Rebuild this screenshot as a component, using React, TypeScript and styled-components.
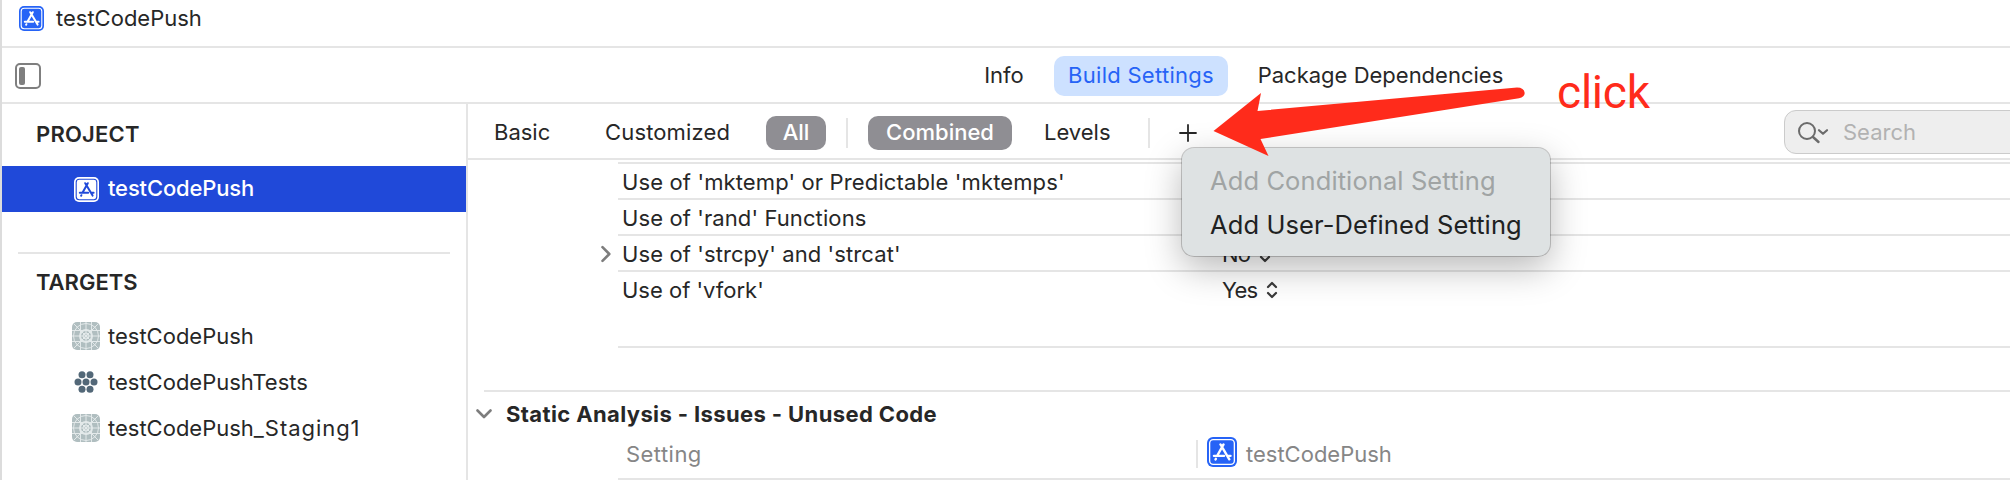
import React from "react";
import styled, { createGlobalStyle } from "styled-components";

const line = "#e5e5e5";
const ink = "#272727";
const accent = "#2663f6";

const GlobalStyle = createGlobalStyle`
  *, *::before, *::after { box-sizing: border-box; }
  body {
    margin: 0;
    background: #fff;
    color: ${ink};
    font-family: Inter, "Liberation Sans", sans-serif;
    font-size: 22px;
    line-height: 26px;
    overflow: hidden;
  }
`;

const Window = styled.div`
  position: relative;
  display: flex;
  flex-direction: column;
  width: 2010px;
  height: 480px;
  overflow: hidden;
  border-left: 2px solid #dcdcdc;
`;

const Label = styled.span<{ $track?: number; $lift?: number }>`
  white-space: nowrap;
  letter-spacing: ${(p) => p.$track ?? 0}px;
  padding-bottom: ${(p) => (p.$lift ?? 0) * 2}px;
`;

const TitleBar = styled.header`
  display: flex;
  align-items: center;
  gap: 12px;
  flex: none;
  height: 48px;
  padding: 0 0 9px 17px;
  border-bottom: 2px solid ${line};
`;

const TabBar = styled.nav`
  display: flex;
  align-items: center;
  gap: 15px;
  flex: none;
  height: 56px;
  padding-left: 13px;
  border-bottom: 2px solid ${line};
`;

const SidebarToggle = styled.span`
  width: 26px;
  height: 26px;
  margin: 2px 913px 0 0;
  padding: 2px;
  border: 2px solid #7f7f7f;
  border-radius: 5px;

  &::before {
    content: "";
    display: block;
    width: 6px;
    height: 18px;
    border-radius: 2px;
    background: #7f7f7f;
  }
`;

const Tab = styled.a<{ $active?: boolean; $width: number }>`
  display: flex;
  align-items: center;
  justify-content: center;
  width: ${(p) => p.$width}px;
  height: 40px;
  margin-top: 2px;
  padding-bottom: 2px;
  border-radius: 10px;
  background: ${(p) => (p.$active ? "#cde1ff" : "transparent")};
  color: ${(p) => (p.$active ? accent : ink)};
`;

const Body = styled.div`
  display: flex;
  flex: 1;
  min-height: 0;
`;

const Sidebar = styled.aside`
  display: flex;
  flex-direction: column;
  flex: none;
  width: 466px;
  border-right: 2px solid ${line};
`;

const Heading = styled.h2<{ $compact?: boolean }>`
  margin: 0;
  padding: ${(p) => (p.$compact ? "15px 0 18px" : "17px 0 19px")};
  padding-left: 34px;
  font-size: 22px;
  font-weight: 600;
  line-height: 26px;
`;

const SidebarRule = styled.hr`
  width: 432px;
  height: 2px;
  margin: 40px 16px 0;
  border: 0;
  background: ${line};
`;

const TargetRow = styled.div<{ $selected?: boolean }>`
  display: flex;
  align-items: center;
  gap: 8px;
  height: 46px;
  padding-left: 70px;
  background: ${(p) => (p.$selected ? "#2049d9" : "transparent")};
  color: ${(p) => (p.$selected ? "#fff" : ink)};
  font-weight: ${(p) => (p.$selected ? 500 : 400)};
`;

const IconCell = styled.span`
  display: flex;
  justify-content: center;
  width: 28px;
`;

const Editor = styled.main`
  display: flex;
  flex-direction: column;
  flex: 1;
  min-width: 0;
`;

const FilterBar = styled.div`
  display: flex;
  align-items: center;
  flex: none;
  height: 56px;
  padding: 2px 0 0 26px;
  border-bottom: 2px solid ${line};

  > * { flex: none; }
`;

const FilterText = styled.span<{ $width: number; $before?: number }>`
  width: ${(p) => p.$width}px;
  margin-left: ${(p) => p.$before ?? 0}px;
`;

const Pill = styled.span<{ $width: number }>`
  display: flex;
  align-items: center;
  justify-content: center;
  width: ${(p) => p.$width}px;
  height: 34px;
  margin-top: 2px;
  padding-bottom: 2px;
  border-radius: 10px;
  background: #8f8e93;
  color: #fff;
  font-weight: 500;
`;

const Separator = styled.span<{ $before?: number; $after: number }>`
  width: 2px;
  height: 30px;
  margin: 2px ${(p) => p.$after}px 0 ${(p) => p.$before ?? 0}px;
  background: ${line};
`;

const ColumnDivider = styled.span`
  width: 2px;
  height: 28px;
  margin-right: 9px;
  background: ${line};
`;

const AddButton = styled.span`
  display: flex;
  margin-top: 2px;
`;

const SearchField = styled.div`
  display: flex;
  align-items: center;
  gap: 12px;
  width: 300px;
  height: 44px;
  margin-left: 587px;
  padding-left: 12px;
  border: 1.5px solid #cbcbcb;
  border-radius: 12px;
  background: #eeeeee;
  color: #b2b2b2;
`;

const Settings = styled.div`
  display: flex;
  flex-direction: column;
  padding-top: 2px;
`;

const SettingRow = styled.div<{ $height?: number }>`
  display: flex;
  align-items: flex-start;
  height: ${(p) => p.$height ?? 36}px;
  margin-left: 150px;
  padding: 5px 0 0 4px;
  border-top: 2px solid ${line};
`;

const SettingName = styled.span`
  display: flex;
  width: 600px;
`;

const Disclosure = styled.span`
  display: flex;
  width: 22px;
  margin-left: -22px;
  padding-top: 4px;
`;

const SettingValue = styled.span`
  display: flex;
  align-items: center;
  gap: 9px;
`;

const GroupHeader = styled.div`
  display: flex;
  align-items: center;
  gap: 14px;
  height: 46px;
  margin-left: 16px;
  border-top: 2px solid ${line};
  font-weight: 700;

  svg { margin-left: -8px; }
`;

const ColumnHeader = styled.div`
  display: flex;
  align-items: center;
  height: 44px;
  margin-left: 150px;
  padding: 0 0 6px 8px;
  border-bottom: 2px solid ${line};
  color: #868686;

  svg { margin: 0 9px 4px 0; }
`;

const ColumnName = styled.span`
  width: 570px;
`;

const Menu = styled.div`
  position: absolute;
  left: 1180px;
  top: 148px;
  display: flex;
  flex-direction: column;
  width: 368px;
  height: 108px;
  padding: 11px 0 0 28px;
  border-radius: 12px;
  background: #dee2e3;
  box-shadow: 0 0 0 1px rgba(0, 0, 0, 0.2), 0 12px 36px rgba(0, 0, 0, 0.28);
  font-size: 25.5px;
`;

const MenuItem = styled.div<{ $disabled?: boolean }>`
  height: 44px;
  line-height: 44px;
  color: ${(p) => (p.$disabled ? "#a0a4a4" : "#202121")};
`;

const Arrow = styled.svg`
  position: absolute;
  left: 1208px;
  top: 84px;
`;

const Note = styled.div`
  position: absolute;
  left: 1555px;
  top: 64px;
  color: #ff2b1b;
  font-family: Roboto, "Liberation Sans", sans-serif;
  font-size: 46px;
  line-height: 56px;
  letter-spacing: -0.2px;
`;

const AppIcon = ({ size = 25, fill = accent, mark = "#fff" }: { size?: number; fill?: string; mark?: string }) => (
  <svg width={size} height={size} viewBox="0 0 25 25" fill="none">
    <rect width="25" height="25" rx="5" fill={fill} />
    <rect x="2.2" y="2.2" width="20.6" height="20.6" rx="3" stroke={mark} strokeWidth="1.1" />
    <g stroke={mark} strokeWidth="2" strokeLinecap="round">
      <path d="M13.8 6.2 8.6 15.4M11.2 6.2l1.2 1.9M13.2 9.4l5.4 9.2M5.8 15.7h8.4M17.4 15.7h2.2M7.4 18.2l-.3.5" />
    </g>
  </svg>
);

const TargetIcon = () => (
  <svg width="28" height="28" viewBox="0 0 28 28" fill="none">
    <rect width="28" height="28" rx="5" fill="#b0bec0" />
    <g stroke="#e3e9ea" strokeWidth="1">
      <path d="M8.5 0v28M14 0v28M19.5 0v28M0 8.5h28M0 14h28M0 19.5h28M2 2l24 24M26 2 2 26" />
      <circle cx="14" cy="14" r="12.5" />
      <circle cx="14" cy="14" r="6" strokeWidth="2" />
      <circle cx="14" cy="14" r="3" />
    </g>
  </svg>
);

const TestsIcon = () => (
  <svg width="24" height="22" viewBox="0 0 24 22" fill="#536878">
    {[[8, 3.7], [16, 3.7], [4, 11], [12, 11], [20, 11], [8, 18.3], [16, 18.3]].map(([x, y]) => (
      <circle key={`${x}-${y}`} cx={x} cy={y} r="3.5" />
    ))}
  </svg>
);

const Stepper = () => (
  <svg width="12" height="18" viewBox="0 0 12 18" fill="none" stroke="#3a3a3a" strokeWidth="2.2" strokeLinecap="round" strokeLinejoin="round">
    <path d="M2 6l4-4 4 4M2 12l4 4 4-4" />
  </svg>
);

const SearchIcon = () => (
  <svg width="34" height="24" viewBox="0 0 34 24" fill="none" stroke="#6b6b6b" strokeWidth="2" strokeLinecap="round" strokeLinejoin="round">
    <circle cx="10" cy="11" r="8" />
    <path d="M16 17l5.5 5" strokeWidth="2.4" />
    <path d="M22 10.2l4 3.6 4-3.6" strokeWidth="2.2" />
  </svg>
);

export default function App() {
  return (
    <>
      <GlobalStyle />
      <Window>
        <TitleBar>
          <AppIcon />
          <Label $lift={0.5}>testCodePush</Label>
        </TitleBar>
        <TabBar>
          <SidebarToggle />
          <Tab $width={70}><Label>Info</Label></Tab>
          <Tab $width={174} $active><Label $track={0.28}>Build Settings</Label></Tab>
          <Tab $width={275}><Label>Package Dependencies</Label></Tab>
        </TabBar>
        <Body>
          <Sidebar>
            <Heading><Label $track={0.2}>PROJECT</Label></Heading>
            <TargetRow $selected>
              <IconCell><AppIcon fill="#fff" mark="#2049d9" /></IconCell>
              <Label $track={-0.15} $lift={1}>testCodePush</Label>
            </TargetRow>
            <SidebarRule />
            <Heading $compact><Label>TARGETS</Label></Heading>
            <TargetRow>
              <IconCell><TargetIcon /></IconCell>
              <Label>testCodePush</Label>
            </TargetRow>
            <TargetRow>
              <IconCell><TestsIcon /></IconCell>
              <Label>testCodePushTests</Label>
            </TargetRow>
            <TargetRow>
              <IconCell><TargetIcon /></IconCell>
              <Label>testCodePush<Label $track={0.95}>_Staging1</Label></Label>
            </TargetRow>
          </Sidebar>
          <Editor>
            <FilterBar>
              <FilterText $width={111}><Label>Basic</Label></FilterText>
              <FilterText $width={161}><Label $track={0.15}>Customized</Label></FilterText>
              <Pill $width={60}><Label>All</Label></Pill>
              <Separator $before={20} $after={20} />
              <Pill $width={144}><Label>Combined</Label></Pill>
              <FilterText $width={104} $before={32}><Label>Levels</Label></FilterText>
              <Separator $after={29} />
              <AddButton>
                <svg width="18" height="18" viewBox="0 0 18 18" stroke={ink} strokeWidth="1.8" strokeLinecap="round">
                  <path d="M9 1v16M1 9h16" />
                </svg>
              </AddButton>
              <SearchField>
                <SearchIcon />
                <Label>Search</Label>
              </SearchField>
            </FilterBar>
            <Settings>
              <SettingRow>
                <SettingName><Label $track={0.13}>Use of 'mktemp' or Predictable 'mktemps'</Label></SettingName>
              </SettingRow>
              <SettingRow>
                <SettingName><Label $track={0.1}>Use of 'rand' Functions</Label></SettingName>
              </SettingRow>
              <SettingRow>
                <SettingName>
                  <Disclosure>
                    <svg width="12" height="18" viewBox="0 0 12 18" fill="none" stroke="#7d7d7d" strokeWidth="2.6" strokeLinecap="round" strokeLinejoin="round">
                      <path d="M2.5 2.2 9.3 9l-6.8 6.8" />
                    </svg>
                  </Disclosure>
                  <Label $track={0.1}>Use of 'strcpy' and 'strcat'</Label>
                </SettingName>
                <SettingValue><Label $track={-0.8}>No</Label><Stepper /></SettingValue>
              </SettingRow>
              <SettingRow $height={76}>
                <SettingName><Label>Use of 'vfork'</Label></SettingName>
                <SettingValue><Label $track={-0.8}>Yes</Label><Stepper /></SettingValue>
              </SettingRow>
              <SettingRow $height={44} />
              <GroupHeader>
                <svg width="16" height="10" viewBox="0 0 16 10" fill="none" stroke="#7d7d7d" strokeWidth="2.6" strokeLinecap="round" strokeLinejoin="round">
                  <path d="M1.5 1.5 8 8l6.5-6.5" />
                </svg>
                <Label $track={0.38}>Static Analysis - Issues - Unused Code</Label>
              </GroupHeader>
              <ColumnHeader>
                <ColumnName><Label $track={0.45}>Setting</Label></ColumnName>
                <ColumnDivider />
                <AppIcon size={30} />
                <Label>testCodePush</Label>
              </ColumnHeader>
            </Settings>
          </Editor>
        </Body>
        <Menu>
          <MenuItem $disabled><Label $track={0.1}>Add Conditional Setting</Label></MenuItem>
          <MenuItem><Label $track={0.1}>Add User-Defined Setting</Label></MenuItem>
        </Menu>
        <Arrow width="320" height="76" viewBox="1210 84 320 76" fill="#ff2b1b">
          <path d="M1213.5 131 1261 93 1257.5 111 1517 87.5Q1524 87.5 1524.7 93 1524.7 97 1519 98.2L1260.5 139 1268.5 156Z" />
        </Arrow>
        <Note>click</Note>
      </Window>
    </>
  );
}
